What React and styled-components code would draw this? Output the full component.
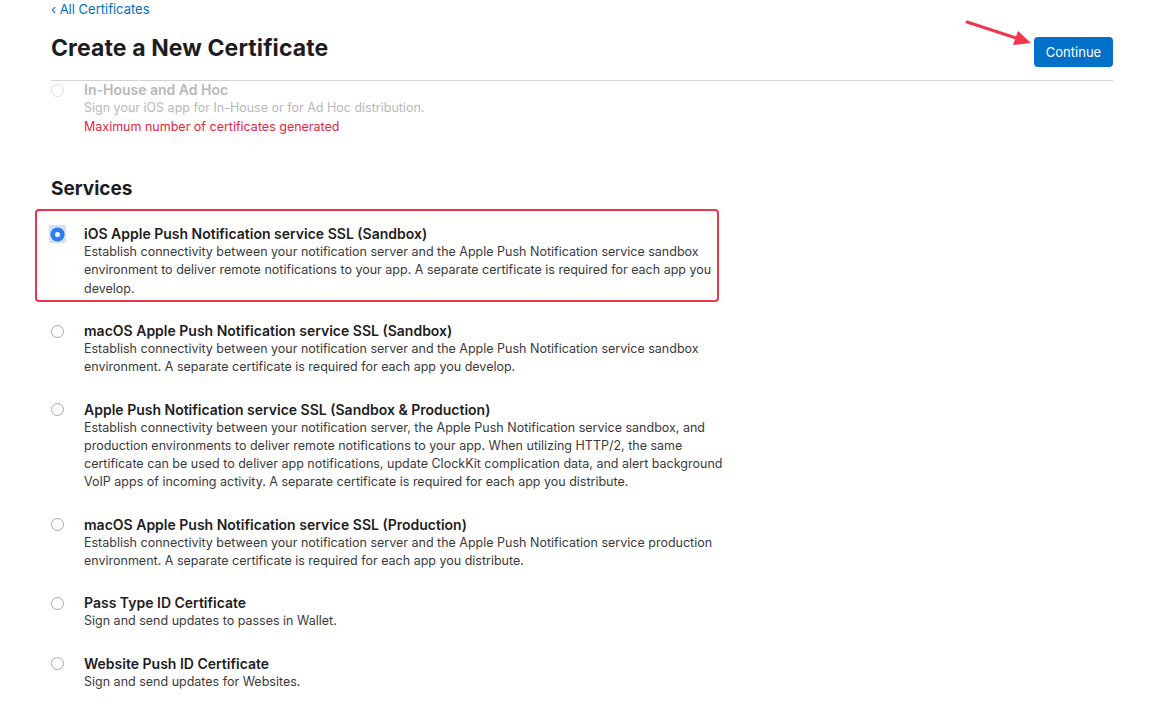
import React, { useState } from "react";
import styled, { createGlobalStyle } from "styled-components";

const GlobalStyle = createGlobalStyle`
  html, body {
    margin: 0;
    padding: 0;
    background: #ffffff;
  }
  body {
    font-family: Inter, "Noto Sans", "Liberation Sans", sans-serif;
    color: #1d1d1f;
    -webkit-font-smoothing: antialiased;
  }
`;

const services = [
  {
    id: "ios-sandbox",
    title: "iOS Apple Push Notification service SSL (Sandbox)",
    lines: [
      "Establish connectivity between your notification server and the Apple Push Notification service sandbox",
      "environment to deliver remote notifications to your app. A separate certificate is required for each app you",
      "develop.",
    ],
  },
  {
    id: "macos-sandbox",
    title: "macOS Apple Push Notification service SSL (Sandbox)",
    lines: [
      "Establish connectivity between your notification server and the Apple Push Notification service sandbox",
      "environment. A separate certificate is required for each app you develop.",
    ],
  },
  {
    id: "apns-both",
    title: "Apple Push Notification service SSL (Sandbox & Production)",
    lines: [
      "Establish connectivity between your notification server, the Apple Push Notification service sandbox, and",
      "production environments to deliver remote notifications to your app. When utilizing HTTP/2, the same",
      "certificate can be used to deliver app notifications, update ClockKit complication data, and alert background",
      "VoIP apps of incoming activity. A separate certificate is required for each app you distribute.",
    ],
  },
  {
    id: "macos-production",
    title: "macOS Apple Push Notification service SSL (Production)",
    lines: [
      "Establish connectivity between your notification server and the Apple Push Notification service production",
      "environment. A separate certificate is required for each app you distribute.",
    ],
  },
  {
    id: "pass-type",
    title: "Pass Type ID Certificate",
    lines: ["Sign and send updates to passes in Wallet."],
  },
  {
    id: "website-push",
    title: "Website Push ID Certificate",
    lines: ["Sign and send updates for Websites."],
  },
];

function Radio({ checked, disabled }) {
  return (
    <RadioWrap checked={checked}>
      <RadioCircle checked={checked} disabled={disabled} />
    </RadioWrap>
  );
}

function App() {
  const [selected, setSelected] = useState("ios-sandbox");

  return (
    <Page>
      <GlobalStyle />
      <BackLink href="#">‹ All Certificates</BackLink>
      <Header>
        <Title>Create a New Certificate</Title>
        <ContinueButton>Continue</ContinueButton>
        <Arrow width="70" height="30" viewBox="0 0 70 30">
          <line x1="2" y1="3" x2="54" y2="20" stroke="#f0364d" strokeWidth="3" strokeLinecap="round" />
          <polygon points="66,24 48,26 53,12" fill="#f0364d" />
        </Arrow>
      </Header>

      <DisabledItem>
        <Radio disabled />
        <Content>
          <ItemTitle muted>In-House and Ad Hoc</ItemTitle>
          <Desc muted>Sign your iOS app for In-House or for Ad Hoc distribution.</Desc>
          <Warning>Maximum number of certificates generated</Warning>
        </Content>
      </DisabledItem>

      <SectionTitle>Services</SectionTitle>
      <List>
        {services.map((s) => (
          <Item
            key={s.id}
            highlighted={s.id === "ios-sandbox"}
            onClick={() => setSelected(s.id)}
          >
            <Radio checked={selected === s.id} />
            <Content>
              <ItemTitle>{s.title}</ItemTitle>
              {s.lines.map((l, i) => (
                <Desc key={i}>{l}</Desc>
              ))}
            </Content>
          </Item>
        ))}
      </List>
    </Page>
  );
}

export default App;

const Page = styled.div`
  width: 1062px;
  padding: 0 0 0 51px;
  height: 712px;
  overflow: hidden;
`;

const BackLink = styled.a`
  display: block;
  font-size: 13px;
  line-height: 18px;
  color: #0070c9;
  text-decoration: none;
`;

const Header = styled.div`
  position: relative;
  display: flex;
  align-items: flex-start;
  justify-content: space-between;
  height: 63px;
  border-bottom: 1px solid #d2d2d7;
  box-sizing: border-box;
`;

const Title = styled.h1`
  margin: 16px 0 0;
  font-size: 23px;
  line-height: 28px;
  font-weight: 700;
  color: #1d1d1f;
  letter-spacing: 0.1px;
`;

const ContinueButton = styled.button`
  width: 79px;
  height: 30px;
  margin-top: 19px;
  border: none;
  border-radius: 4px;
  background: #0070c9;
  color: #ffffff;
  font-family: inherit;
  font-size: 13px;
  cursor: pointer;
`;

const Arrow = styled.svg`
  position: absolute;
  left: 914px;
  top: 1px;
`;

const DisabledItem = styled.div`
  display: flex;
  margin-left: -2px;
`;

const RadioWrap = styled.div`
  flex: 0 0 17px;
  height: 18px;
  margin-right: 18px;
  display: flex;
  align-items: center;
  justify-content: center;
  background: ${(p) => (p.checked ? "#cfe3fb" : "transparent")};
`;

const RadioCircle = styled.span`
  width: 13px;
  height: 13px;
  border-radius: 50%;
  box-sizing: border-box;
  border: ${(p) => (p.checked ? "4px solid #2f7cf6" : `1px solid ${p.disabled ? "#dcdcdc" : "#a8a8a8"}`)};
  background: #ffffff;
  box-shadow: ${(p) => (p.checked ? "0 0 0 0.5px #2a6fe0" : "none")};
`;

const Content = styled.div`
  width: 660px;
  flex: 0 0 660px;
`;

const ItemTitle = styled.div`
  font-size: 14px;
  line-height: 18px;
  font-weight: 600;
  color: ${(p) => (p.muted ? "#b8b8b8" : "#1d1d1f")};
  white-space: nowrap;
`;

const Desc = styled.div`
  font-size: 12.5px;
  line-height: 18.2px;
  color: ${(p) => (p.muted ? "#b8b8b8" : "#3a3a3c")};
  white-space: nowrap;
`;

const Warning = styled.div`
  font-size: 12.5px;
  line-height: 19px;
  color: #e3283f;
`;

const SectionTitle = styled.h2`
  margin: 41px 0 8px;
  font-size: 19px;
  line-height: 24px;
  font-weight: 700;
  color: #1d1d1f;
`;

const List = styled.div`
  display: flex;
  flex-direction: column;
  gap: 4.2px;
  margin-left: -16px;
`;

const Item = styled.div`
  display: flex;
  width: 684px;
  box-sizing: border-box;
  padding: 14px 12px 2px 12px;
  border: 2px solid ${(p) => (p.highlighted ? "#e8364c" : "transparent")};
  border-radius: 4px;
  cursor: pointer;
`;
